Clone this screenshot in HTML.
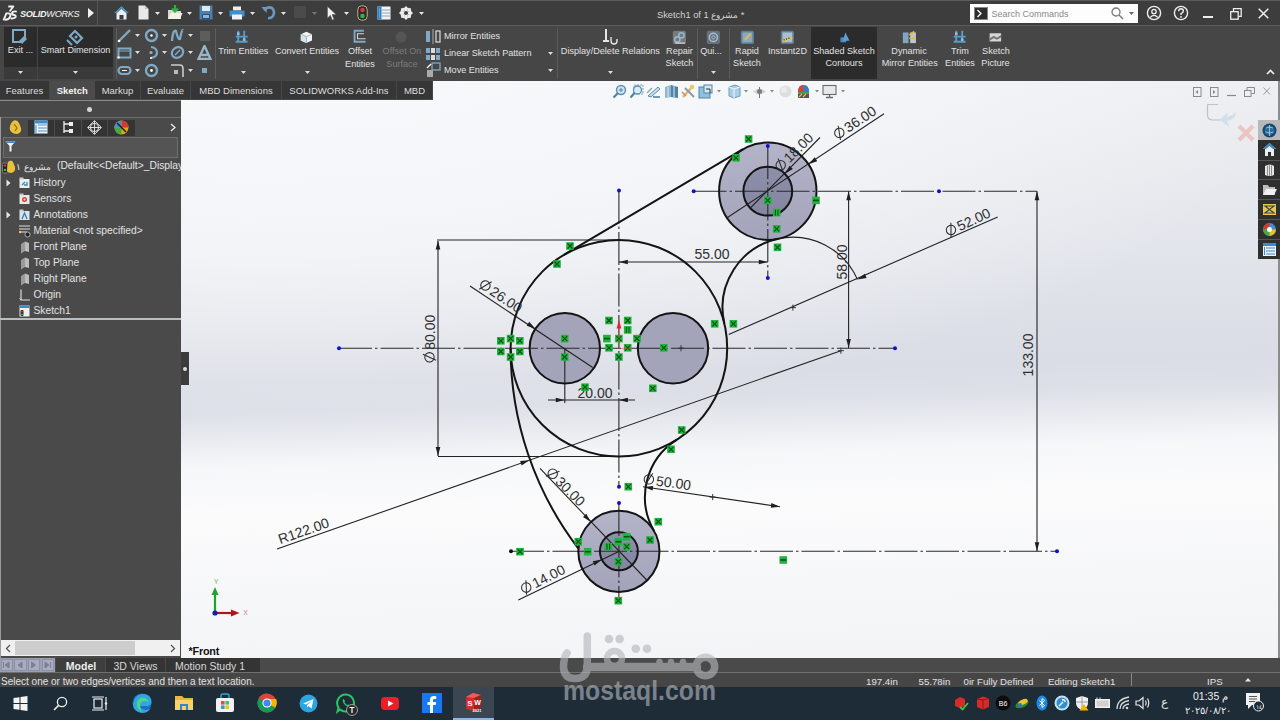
<!DOCTYPE html>
<html><head><meta charset="utf-8">
<style>
*{margin:0;padding:0;box-sizing:border-box}
html,body{width:1280px;height:720px;overflow:hidden;background:#464646;font-family:"Liberation Sans",sans-serif}
.a{position:absolute}
.t{position:absolute;white-space:nowrap;color:#e4e4e4;font-size:10px;line-height:12px}
#title{left:0;top:0;width:1280px;height:26px;background:#3d3d3d;border-bottom:1px solid #5c5c5c}
#ribbon{left:0;top:27px;width:1280px;height:53px;background:#464646}
#tabs{left:0;top:80px;width:1280px;height:20px;background:#484848}
#left{left:0;top:100px;width:181px;height:558px;background:#4a4a4a}
#view{left:181px;top:81px;width:1099px;height:577px;background:radial-gradient(ellipse 980px 340px at 120px 0px,rgba(248,249,251,0.97) 0%,rgba(248,249,251,0.72) 50%,rgba(248,249,251,0) 100%),linear-gradient(178.4deg,#eef0f3 15px,#e9ebef 95px,#e2e5eb 195px,#dcdfe6 270px,#dadde5 305px,#dde0e7 333px,#e9ebf0 360px,#f6f7f9 387px,#fbfbfc 435px,#f3f4f6 592px)}
#btabs{left:0;top:658px;width:1280px;height:14px;background:#474747}
#status{left:0;top:672px;width:1280px;height:14px;background:#444444;border-top:1px solid #6a6a6a}
#task{left:0;top:686px;width:1280px;height:34px;background:#1d2b37}
</style></head><body>
<div id="title" class="a">
<div class="a" style="left:0;top:0;width:1280px;height:1px;background:#5a5a5a"></div>
<div class="a" style="left:97px;top:1px;width:1px;height:24px;background:#555"></div>
<svg class="a" style="left:0;top:0" width="20" height="22" viewBox="0 0 20 22"><g fill="none" stroke="#f2f2f2" stroke-width="1.9" stroke-linejoin="round"><path d="M8.3,6.5 H13.3 L9.6,11.5"/><path d="M5.6,13.4 H8.6 Q11.3,13.6 10.2,16.4 Q9.2,19.6 5,19.8 M6.3,13.5 L3.5,20.3"/><path d="M16.8,11.6 Q12.6,10.8 12,13 Q11.8,14.6 14.2,15 Q16.2,15.6 15.6,17.2 Q14.8,18.8 10.6,18.4"/></g></svg>
<div class="t" style="left:20px;top:8px;font-size:9.2px;font-weight:bold;font-style:italic;color:#f2f2f2;letter-spacing:-0.35px">SOLID<span style="font-weight:normal">WORKS</span></div>
<svg class="a" style="left:87px;top:8px" width="8" height="10"><path d="M1,0 L7,5 L1,10Z" fill="#f0f0f0"/></svg>
<svg class="a" style="left:114px;top:6px" width="15" height="14" viewBox="0 0 15 14"><path d="M7.5,0.5 L14.5,7 L12.5,7 L12.5,13.5 L2.5,13.5 L2.5,7 L0.5,7Z" fill="#e8eef2"/><path d="M7.5,0.5 L14.5,7 L12,7 L7.5,3 L3,7 L0.5,7Z" fill="#3d87b8"/><rect x="5.5" y="9" width="4" height="4.5" fill="#3d3d3d"/></svg>
<svg class="a" style="left:138px;top:5px" width="11" height="15"><path d="M0.5,0.5 H7 L10.5,4 V14.5 H0.5Z" fill="#e9e9e9"/><path d="M7,0.5 V4 H10.5" fill="#bbb"/></svg>
<svg class="a" style="left:167px;top:4px" width="16" height="16" viewBox="0 0 16 16"><path d="M1,6 H6 L7,7 H14 V15 H1Z" fill="#d8d8c8"/><path d="M1,15 L4,9 H15.5 L13,15Z" fill="#f2f2e6"/><path d="M8,1 V7 M5,4.5 L8,7.5 L11,4.5" stroke="#2fae3f" stroke-width="2.2" fill="none"/></svg>
<svg class="a" style="left:199px;top:5px" width="14" height="15" viewBox="0 0 14 15"><rect x="0.5" y="0.5" width="13" height="14" fill="#4a7fae"/><rect x="3" y="1" width="8" height="5" fill="#dfe9f2"/><rect x="3" y="9" width="8" height="5.5" fill="#2b4f70"/><rect x="4" y="10" width="6" height="3" fill="#8fb6d8"/></svg>
<svg class="a" style="left:229px;top:6px" width="16" height="14" viewBox="0 0 16 14"><rect x="4" y="0.5" width="8" height="4" fill="#f0f0f0"/><rect x="0.5" y="4.5" width="15" height="6" fill="#3f8fcc"/><rect x="3" y="8.5" width="10" height="5" fill="#f2f2f2"/></svg>
<svg class="a" style="left:261px;top:5px" width="15" height="15" viewBox="0 0 15 15"><path d="M3,5 Q7,1 11,3 Q14.5,6 12,11 Q10,13.5 7,13" stroke="#6c9ac4" stroke-width="2.6" fill="none"/><path d="M0.5,2 L5.5,8 L6,2Z" fill="#6c9ac4"/></svg>
<svg class="a" style="left:294px;top:6px" width="13" height="13"><rect x="0" y="0" width="12" height="12" fill="#4b4b4b"/></svg>
<svg class="a" style="left:327px;top:6px" width="10" height="15" viewBox="0 0 10 15"><path d="M0.5,0.5 L0.5,12 L3.3,9.3 L5.3,14 L7,13.2 L5,8.6 L9,8.6Z" fill="#f2f2f2" stroke="#666" stroke-width="0.6"/></svg>
<svg class="a" style="left:357px;top:5px" width="11" height="16" viewBox="0 0 11 16"><rect x="0.8" y="0.8" width="9.4" height="14.4" rx="4" fill="#2b2b2b" stroke="#b8b48a" stroke-width="1"/><circle cx="5.5" cy="5" r="2.3" fill="#d9363a"/><circle cx="5.5" cy="11" r="2.3" fill="#38b04a"/></svg>
<svg class="a" style="left:377px;top:6px" width="14" height="14" viewBox="0 0 14 14"><rect x="0.5" y="0.5" width="13" height="13" fill="#f4f4f4"/><rect x="0.5" y="0.5" width="4" height="13" fill="#2f82c4"/><path d="M5,4 H13 M5,7 H13 M5,10 H13 M2.5,2 V12" stroke="#7a9cb8" stroke-width="0.9"/></svg>
<svg class="a" style="left:399px;top:6px" width="14" height="14" viewBox="0 0 14 14"><circle cx="7" cy="7" r="4.6" fill="none" stroke="#eee" stroke-width="2.4"/><path d="M7,0.5 V13.5 M0.5,7 H13.5 M2.4,2.4 L11.6,11.6 M11.6,2.4 L2.4,11.6" stroke="#eee" stroke-width="2"/><circle cx="7" cy="7" r="2" fill="#3d3d3d"/></svg>
<svg class="a" style="left:155px;top:12px" width="5" height="3"><path d="M0,0 H5 L2.5,3Z" fill="#e6e6e6"/></svg>
<svg class="a" style="left:187px;top:12px" width="5" height="3"><path d="M0,0 H5 L2.5,3Z" fill="#e6e6e6"/></svg>
<svg class="a" style="left:218px;top:12px" width="5" height="3"><path d="M0,0 H5 L2.5,3Z" fill="#e6e6e6"/></svg>
<svg class="a" style="left:250px;top:12px" width="5" height="3"><path d="M0,0 H5 L2.5,3Z" fill="#e6e6e6"/></svg>
<svg class="a" style="left:281px;top:12px" width="5" height="3"><path d="M0,0 H5 L2.5,3Z" fill="#e6e6e6"/></svg>
<svg class="a" style="left:344px;top:12px" width="5" height="3"><path d="M0,0 H5 L2.5,3Z" fill="#e6e6e6"/></svg>
<svg class="a" style="left:419px;top:12px" width="5" height="3"><path d="M0,0 H5 L2.5,3Z" fill="#e6e6e6"/></svg>
<svg class="a" style="left:312px;top:12px" width="5" height="3"><path d="M0,0 H5 L2.5,3Z" fill="#777"/></svg>
<div class="t" style="left:657px;top:8.5px;font-size:9.3px;color:#d2d2d2">Sketch1 of 1 <span style="font-size:9px">مشروع</span> *</div>
<div class="a" style="left:970px;top:4px;width:168px;height:19px;background:#fdfdfd"></div>
<svg class="a" style="left:974px;top:7px" width="14" height="13"><rect x="0.5" y="0.5" width="13" height="12" fill="#2e2e2e" stroke="#888" stroke-width="1"/><path d="M3.5,3 L7,6.5 L3.5,10" stroke="#fff" stroke-width="1.3" fill="none"/></svg>
<div class="t" style="left:991.5px;top:8px;font-size:9px;color:#8a8a8a">Search Commands</div>
<svg class="a" style="left:1111px;top:7px" width="13" height="13"><circle cx="5" cy="5" r="4" stroke="#777" stroke-width="1.3" fill="none"/><path d="M8,8 L12,12" stroke="#777" stroke-width="1.5"/></svg>
<svg class="a" style="left:1129px;top:12px" width="5" height="3"><path d="M0,0 H5 L2.5,3Z" fill="#666"/></svg>
<svg class="a" style="left:1146px;top:5px" width="16" height="16"><circle cx="8" cy="8" r="6.6" stroke="#eee" stroke-width="1.4" fill="none"/><circle cx="8" cy="6.5" r="2.2" stroke="#eee" stroke-width="1.3" fill="none"/><path d="M4.3,12.4 Q8,8.5 11.7,12.4" stroke="#eee" stroke-width="1.3" fill="none"/></svg>
<svg class="a" style="left:1173px;top:5px" width="16" height="16"><circle cx="8" cy="8" r="6.6" stroke="#eee" stroke-width="1.4" fill="none"/><path d="M5.7,6.2 Q5.7,3.8 8,3.8 Q10.4,3.8 10.4,6 Q10.4,7.4 8,8.6 V10" stroke="#eee" stroke-width="1.4" fill="none"/><circle cx="8" cy="12" r="0.9" fill="#eee"/></svg>
<div class="a" style="left:1203px;top:16px;width:10px;height:1.5px;background:#eee"></div>
<svg class="a" style="left:1230px;top:8px" width="12" height="12"><rect x="0.7" y="3.7" width="7.5" height="7.5" stroke="#eee" stroke-width="1.3" fill="none"/><path d="M3.5,3.5 V0.7 H11.2 V8.4 H8.5" stroke="#eee" stroke-width="1.3" fill="none"/></svg>
<svg class="a" style="left:1258px;top:8px" width="11" height="11"><path d="M0.7,0.7 L10.3,10.3 M10.3,0.7 L0.7,10.3" stroke="#eee" stroke-width="1.5"/></svg>
</div>
<div id="ribbon" class="a"></div>
<div class="a" style="left:4px;top:27px;width:33px;height:40px;background:#2b2b2b"></div>
<div class="a" style="left:4px;top:67px;width:33px;height:12px;background:#3a3a3a"></div>
<div class="a" style="left:38px;top:27px;width:75px;height:40px;background:#2b2b2b"></div>
<div class="a" style="left:38px;top:67px;width:75px;height:12px;background:#3a3a3a"></div>
<div class="a" style="left:811px;top:27px;width:66px;height:52px;background:#2b2b2b"></div>
<div class="a" style="left:116px;top:28px;width:1px;height:51px;background:#5c5c5c"></div>
<div class="a" style="left:215px;top:28px;width:1px;height:51px;background:#5c5c5c"></div>
<div class="a" style="left:557px;top:28px;width:1px;height:51px;background:#5c5c5c"></div>
<div class="a" style="left:697px;top:28px;width:1px;height:51px;background:#5c5c5c"></div>
<div class="a" style="left:729px;top:28px;width:1px;height:51px;background:#5c5c5c"></div>
<svg class="a" style="left:11.0px;top:28.0px" width="18.0" height="18.0" viewBox="0 0 18 18"><path d="M2,2 H14 V10 L10,14 H2Z" fill="none" stroke="#7fa9c4" stroke-width="2"/><path d="M8,13 L13,8 L16,11 L11,16Z" fill="#7fa9c4"/></svg>
<div class="t" style="left:-39.5px;width:120px;text-align:center;top:43.7px;font-size:9.1px;color:#e2e2e2">Exit ...</div>
<svg class="a" style="left:17.5px;top:70.5px" width="5" height="3"><path d="M0,0 H5 L2.5,3Z" fill="#dcdcdc"/></svg>
<svg class="a" style="left:66.0px;top:28.0px" width="18.0" height="18.0" viewBox="0 0 18 18"><path d="M4,8 L9,3 L16,10 L11,15Z" fill="none" stroke="#7fa9c4" stroke-width="2.2"/><path d="M1,12 L6,17" stroke="#7fa9c4" stroke-width="2"/><circle cx="10" cy="9" r="1.5" fill="#7fa9c4"/></svg>
<div class="t" style="left:15.5px;width:120px;text-align:center;top:43.7px;font-size:9.1px;color:#e2e2e2">Smart Dimension</div>
<svg class="a" style="left:72.5px;top:70.5px" width="5" height="3"><path d="M0,0 H5 L2.5,3Z" fill="#dcdcdc"/></svg>
<svg class="a" style="left:116.5px;top:28.1px" width="15.0" height="15.0" viewBox="0 0 15 15"><path d="M2,13 L13,2" stroke="#7fa9c4" stroke-width="2.4"/><circle cx="2" cy="13" r="1.3" fill="#fff"/></svg>
<svg class="a" style="left:144.0px;top:28.1px" width="15.0" height="15.0" viewBox="0 0 15 15"><circle cx="7.5" cy="7.5" r="5.5" fill="none" stroke="#7fa9c4" stroke-width="2.4"/><circle cx="7.5" cy="7.5" r="1.2" fill="#fff"/></svg>
<svg class="a" style="left:170.2px;top:28.1px" width="15.0" height="15.0" viewBox="0 0 15 15"><path d="M2,13 Q3,1 6,3 Q8,12 10,11 Q12,1 13,2" fill="none" stroke="#7fa9c4" stroke-width="2.2"/></svg>
<svg class="a" style="left:197.2px;top:28.1px" width="15.0" height="15.0" viewBox="0 0 15 15"><rect x="3" y="3" width="10" height="10" fill="#5d5d5d"/></svg>
<svg class="a" style="left:116.5px;top:45.3px" width="15.0" height="15.0" viewBox="0 0 15 15"><rect x="1.5" y="3.5" width="12" height="9" fill="none" stroke="#7fa9c4" stroke-width="2"/><path d="M1.5,6 H13" stroke="#7fa9c4" stroke-width="1"/><circle cx="1.5" cy="12.5" r="1.2" fill="#fff"/></svg>
<svg class="a" style="left:144.0px;top:45.3px" width="15.0" height="15.0" viewBox="0 0 15 15"><path d="M7,2 Q13,3 13,7.5 Q13,12 7,13" fill="none" stroke="#7fa9c4" stroke-width="2.2"/><circle cx="7" cy="7.5" r="1.6" fill="#aaa"/><circle cx="7" cy="13" r="1" fill="#fff"/></svg>
<svg class="a" style="left:170.2px;top:45.3px" width="15.0" height="15.0" viewBox="0 0 15 15"><ellipse cx="7.5" cy="7.5" rx="6" ry="5" transform="rotate(-35 7.5 7.5)" fill="none" stroke="#7fa9c4" stroke-width="2.2"/><path d="M5,10 L10,5" stroke="#7fa9c4" stroke-width="1.6"/></svg>
<svg class="a" style="left:197.2px;top:45.3px" width="15.0" height="15.0" viewBox="0 0 15 15"><path d="M7.5,1 L13.5,14 H1.5Z M4.5,10 H10.5" fill="none" stroke="#9ab8cc" stroke-width="2.3"/></svg>
<svg class="a" style="left:116.5px;top:62.8px" width="15.0" height="15.0" viewBox="0 0 15 15"><rect x="1.5" y="4" width="12" height="7" rx="3.5" fill="none" stroke="#7fa9c4" stroke-width="2.2"/><path d="M5,7.5 H10" stroke="#fff" stroke-width="1"/></svg>
<svg class="a" style="left:144.0px;top:62.8px" width="15.0" height="15.0" viewBox="0 0 15 15"><circle cx="7.5" cy="7.5" r="5.5" fill="none" stroke="#7fa9c4" stroke-width="2.4"/><circle cx="7.5" cy="7.5" r="1.4" fill="#fff"/></svg>
<svg class="a" style="left:170.2px;top:62.8px" width="15.0" height="15.0" viewBox="0 0 15 15"><path d="M1,2 H10 Q13,2 13,6 V14" fill="none" stroke="#ccc" stroke-width="1.6"/><rect x="4" y="7" width="4" height="4" fill="#bbb"/></svg>
<svg class="a" style="left:197.2px;top:62.8px" width="15.0" height="15.0" viewBox="0 0 15 15"><rect x="5" y="5" width="5" height="5" fill="#7fa9c4"/></svg>
<svg class="a" style="left:135.0px;top:34.1px" width="5" height="3"><path d="M0,0 H5 L2.5,3Z" fill="#dcdcdc"/></svg>
<svg class="a" style="left:161.5px;top:34.1px" width="5" height="3"><path d="M0,0 H5 L2.5,3Z" fill="#dcdcdc"/></svg>
<svg class="a" style="left:188.1px;top:34.1px" width="5" height="3"><path d="M0,0 H5 L2.5,3Z" fill="#dcdcdc"/></svg>
<svg class="a" style="left:135.0px;top:51.3px" width="5" height="3"><path d="M0,0 H5 L2.5,3Z" fill="#dcdcdc"/></svg>
<svg class="a" style="left:161.5px;top:51.3px" width="5" height="3"><path d="M0,0 H5 L2.5,3Z" fill="#dcdcdc"/></svg>
<svg class="a" style="left:188.1px;top:51.3px" width="5" height="3"><path d="M0,0 H5 L2.5,3Z" fill="#dcdcdc"/></svg>
<svg class="a" style="left:135.0px;top:68.8px" width="5" height="3"><path d="M0,0 H5 L2.5,3Z" fill="#dcdcdc"/></svg>
<svg class="a" style="left:188.1px;top:68.8px" width="5" height="3"><path d="M0,0 H5 L2.5,3Z" fill="#dcdcdc"/></svg>
<svg class="a" style="left:234.35px;top:29.35px" width="15.299999999999999" height="15.299999999999999" viewBox="0 0 18 18"><path d="M5,2 V16 M12,2 V16 M2,9 H16 M2,15 H16" stroke="#5a9cc8" stroke-width="2.2"/><rect x="3.5" y="4" width="3" height="3" fill="#8cc4e6"/><rect x="10.5" y="11" width="3" height="3" fill="#8cc4e6"/></svg>
<div class="t" style="left:183.3px;width:120px;text-align:center;top:44.6px;font-size:9.1px;color:#e2e2e2"><u style="text-decoration:none;border-bottom:0">T</u>rim Entities</div>
<svg class="a" style="left:240.5px;top:70.5px" width="5" height="3"><path d="M0,0 H5 L2.5,3Z" fill="#dcdcdc"/></svg>
<svg class="a" style="left:299.6px;top:30.6px" width="12.8" height="12.8" viewBox="0 0 16 16"><path d="M8,1 L15,4 V12 L8,15 L1,12 V4Z" fill="#f4f4f4"/><path d="M1,4 L8,7 V15 L1,12Z" fill="#d8e4ea"/><path d="M8,7 V15 M1,4 L8,7 L15,4" stroke="#7ab0c8" stroke-width="1" fill="none"/></svg>
<div class="t" style="left:247px;width:120px;text-align:center;top:44.6px;font-size:9.1px;color:#e2e2e2">Convert Entities</div>
<svg class="a" style="left:304.5px;top:70.5px" width="5" height="3"><path d="M0,0 H5 L2.5,3Z" fill="#dcdcdc"/></svg>
<svg class="a" style="left:352.35px;top:29.35px" width="15.299999999999999" height="15.299999999999999" viewBox="0 0 18 18"><path d="M14,2 H3 V15 H16" fill="none" stroke="#7fa9c4" stroke-width="2.2"/><path d="M14,5.5 H6.5 V11.5 H16" fill="none" stroke="#d0d8de" stroke-width="1.2"/></svg>
<div class="t" style="left:300px;width:120px;text-align:center;top:44.6px;font-size:9.1px;color:#e2e2e2">Offset</div>
<div class="t" style="left:300px;width:120px;text-align:center;top:57.7px;font-size:9.1px;color:#e2e2e2">Entities</div>
<svg class="a" style="left:393.0px;top:29.0px" width="16.0" height="16.0" viewBox="0 0 16 16"><circle cx="8" cy="8" r="5.5" fill="#555"/></svg>
<div class="t" style="left:342px;width:120px;text-align:center;top:44.6px;font-size:9.1px;color:#7c7c7c">Offset On</div>
<div class="t" style="left:342px;width:120px;text-align:center;top:57.7px;font-size:9.1px;color:#7c7c7c">Surface</div>
<svg class="a" style="left:425.0px;top:28.0px" width="16.0" height="16.0" viewBox="0 0 16 16"><rect x="1" y="3" width="4" height="11" fill="#7fa9c4"/><rect x="11" y="3" width="4" height="11" fill="none" stroke="#ddd" stroke-width="1.2"/><path d="M8,1 V16" stroke="#aaa" stroke-width="1"/></svg>
<div class="t" style="left:444px;top:29.7px;font-size:9.1px;color:#e2e2e2">Mirror Entities</div>
<svg class="a" style="left:425.0px;top:45.6px" width="16.0" height="16.0" viewBox="0 0 16 16"><rect x="1" y="2" width="4" height="5" fill="#7fa9c4"/><rect x="6" y="2" width="4" height="5" fill="#ddd"/><rect x="11" y="2" width="4" height="5" fill="#7fa9c4"/><rect x="1" y="9" width="4" height="5" fill="#7fa9c4"/><rect x="6" y="9" width="4" height="5" fill="#ddd"/><rect x="11" y="9" width="4" height="5" fill="#7fa9c4"/></svg>
<div class="t" style="left:444px;top:47.300000000000004px;font-size:9.1px;color:#e2e2e2">Linear Sketch Pattern</div>
<svg class="a" style="left:548.0px;top:52.1px" width="5" height="3"><path d="M0,0 H5 L2.5,3Z" fill="#dcdcdc"/></svg>
<svg class="a" style="left:425.0px;top:62.2px" width="16.0" height="16.0" viewBox="0 0 16 16"><rect x="7" y="1" width="8" height="7" fill="none" stroke="#7fa9c4" stroke-width="1.3"/><rect x="2" y="8" width="6" height="7" fill="#aaa"/><path d="M2,6 L6,2" stroke="#fff" stroke-width="1.2"/></svg>
<div class="t" style="left:444px;top:63.900000000000006px;font-size:9.1px;color:#e2e2e2">Move Entities</div>
<svg class="a" style="left:548.0px;top:68.7px" width="5" height="3"><path d="M0,0 H5 L2.5,3Z" fill="#dcdcdc"/></svg>
<svg class="a" style="left:601.0px;top:28.0px" width="18.0" height="18.0" viewBox="0 0 18 18"><path d="M5,1 V13 M2,13 H8" stroke="#e6e6e6" stroke-width="2"/><path d="M10,9 V13 Q10,16 13,16 Q16,16 16,13 V11" fill="none" stroke="#e6e6e6" stroke-width="1.4"/></svg>
<div class="t" style="left:550.4px;width:120px;text-align:center;top:44.5px;font-size:9.1px;color:#e2e2e2">Display/Delete Relations</div>
<svg class="a" style="left:607.5px;top:70.5px" width="5" height="3"><path d="M0,0 H5 L2.5,3Z" fill="#dcdcdc"/></svg>
<svg class="a" style="left:671.62px;top:29.62px" width="14.76" height="14.76" viewBox="0 0 18 18"><rect x="1" y="1" width="16" height="16" rx="2" fill="#7a7a7a"/><circle cx="11.5" cy="6.5" r="3.2" fill="none" stroke="#8fb8d2" stroke-width="1.8"/><circle cx="6.5" cy="11.5" r="3.2" fill="none" stroke="#8fb8d2" stroke-width="1.8"/><path d="M4,16 H16" stroke="#ddd" stroke-width="1.4"/></svg>
<div class="t" style="left:619.5px;width:120px;text-align:center;top:44.5px;font-size:9.1px;color:#e2e2e2">Repair</div>
<div class="t" style="left:619.5px;width:120px;text-align:center;top:57.300000000000004px;font-size:9.1px;color:#e2e2e2">Sketch</div>
<svg class="a" style="left:705.62px;top:29.62px" width="14.76" height="14.76" viewBox="0 0 18 18"><rect x="1" y="1" width="16" height="16" rx="2" fill="#62737f"/><circle cx="9" cy="9" r="5" fill="none" stroke="#aebfcb" stroke-width="1.8"/><circle cx="9" cy="9" r="2" fill="none" stroke="#aebfcb" stroke-width="1.2"/></svg>
<div class="t" style="left:651px;width:120px;text-align:center;top:44.5px;font-size:9.1px;color:#e2e2e2">Qui...</div>
<svg class="a" style="left:710.5px;top:70.5px" width="5" height="3"><path d="M0,0 H5 L2.5,3Z" fill="#dcdcdc"/></svg>
<svg class="a" style="left:739.62px;top:29.62px" width="14.76" height="14.76" viewBox="0 0 18 18"><rect x="1" y="1" width="16" height="16" rx="2" fill="#5f7f98"/><rect x="3" y="3" width="12" height="12" fill="#8aa9bf"/><path d="M6,12 L13,5" stroke="#e9b64a" stroke-width="2.6"/></svg>
<div class="t" style="left:687px;width:120px;text-align:center;top:44.5px;font-size:9.1px;color:#e2e2e2">Rapid</div>
<div class="t" style="left:687px;width:120px;text-align:center;top:57.300000000000004px;font-size:9.1px;color:#e2e2e2">Sketch</div>
<svg class="a" style="left:779.62px;top:29.62px" width="14.76" height="14.76" viewBox="0 0 18 18"><rect x="1" y="1" width="16" height="16" rx="2" fill="#5f7f98"/><rect x="3" y="3" width="12" height="12" fill="#a9c0d0"/><path d="M3,14 L15,9" stroke="#e9c34a" stroke-width="2.4"/><path d="M5,13 V11 M8,12 V10 M11,11 V9" stroke="#222" stroke-width="1"/></svg>
<div class="t" style="left:727.5px;width:120px;text-align:center;top:44.5px;font-size:9.1px;color:#e2e2e2">Instant2D</div>
<svg class="a" style="left:837.62px;top:29.62px" width="14.76" height="14.76" viewBox="0 0 18 18"><rect x="3" y="9" width="7" height="6" fill="#4a8cc0"/><path d="M9,3 L14,13 H6Z" fill="#5aa0d4"/></svg>
<div class="t" style="left:784px;width:120px;text-align:center;top:44.5px;font-size:9.1px;color:#e2e2e2">Shaded Sketch</div>
<div class="t" style="left:784px;width:120px;text-align:center;top:57.300000000000004px;font-size:9.1px;color:#e2e2e2">Contours</div>
<svg class="a" style="left:901.62px;top:29.62px" width="14.76" height="14.76" viewBox="0 0 18 18"><rect x="1" y="3" width="7" height="13" fill="#7fa6c2"/><rect x="10" y="3" width="7" height="13" fill="#b9c9d3"/><path d="M9,6 L15,2 M9,10 L16,10" stroke="#e9b64a" stroke-width="2.3"/></svg>
<div class="t" style="left:849px;width:120px;text-align:center;top:44.5px;font-size:9.1px;color:#e2e2e2">Dynamic</div>
<div class="t" style="left:849.7px;width:120px;text-align:center;top:57.300000000000004px;font-size:9.1px;color:#e2e2e2">Mirror Entities</div>
<svg class="a" style="left:952.35px;top:29.35px" width="15.299999999999999" height="15.299999999999999" viewBox="0 0 18 18"><path d="M5,2 V16 M12,2 V16 M2,9 H16 M2,15 H16" stroke="#5a9cc8" stroke-width="2.2"/><rect x="3.5" y="4" width="3" height="3" fill="#8cc4e6"/><rect x="10.5" y="11" width="3" height="3" fill="#8cc4e6"/></svg>
<div class="t" style="left:900px;width:120px;text-align:center;top:44.5px;font-size:9.1px;color:#e2e2e2">Trim</div>
<div class="t" style="left:900px;width:120px;text-align:center;top:57.300000000000004px;font-size:9.1px;color:#e2e2e2">Entities</div>
<svg class="a" style="left:987.62px;top:29.62px" width="14.76" height="14.76" viewBox="0 0 18 18"><rect x="2" y="4" width="14" height="10" fill="#d6d6d6"/><path d="M2,10 L7,7 L11,9 L16,6 V9 L11,12 L7,10 L2,13Z" fill="#777"/></svg>
<div class="t" style="left:936px;width:120px;text-align:center;top:44.5px;font-size:9.1px;color:#e2e2e2">Sketch</div>
<div class="t" style="left:935.5px;width:120px;text-align:center;top:57.300000000000004px;font-size:9.1px;color:#e2e2e2">Picture</div>
<svg class="a" style="left:1266px;top:69px" width="9" height="6"><path d="M1,5 L4.5,1.5 L8,5" stroke="#eee" stroke-width="1.6" fill="none"/></svg>
<div id="view" class="a" style="overflow:hidden"><div class="a" style="left:-181px;top:-81px;width:1280px;height:720px">
<svg class="a" style="left:0;top:0" width="1280" height="720" viewBox="0 0 1280 720">
<defs><linearGradient id="g1" x1="0" y1="0" x2="0" y2="1"><stop offset="0" stop-color="#b3b4c8"/><stop offset="1" stop-color="#a3a4bb"/></linearGradient>
<linearGradient id="g2" x1="0" y1="0" x2="0" y2="1"><stop offset="0" stop-color="#8e8fa9"/><stop offset="1" stop-color="#8485a1"/></linearGradient></defs>
<circle cx="767.8" cy="191.2" r="48.7" fill="url(#g1)"/>
<circle cx="618.9" cy="551.3" r="40.6" fill="url(#g1)"/>
<circle cx="767.8" cy="191.2" r="24.4" fill="url(#g2)"/>
<circle cx="618.9" cy="551.3" r="19.0" fill="url(#g2)"/>
<circle cx="564.8" cy="348.2" r="35.2" fill="#a3a4ba"/>
<circle cx="673.0" cy="348.2" r="35.2" fill="#a3a4ba"/>
<line x1="339.0" y1="348.2" x2="895.0" y2="348.2" stroke="#2a2a2a" stroke-width="1.1" stroke-dasharray="33,3,2.5,3" fill="none"/>
<line x1="618.9" y1="190.5" x2="618.9" y2="487.0" stroke="#2a2a2a" stroke-width="1.1" stroke-dasharray="33,3,2.5,3" fill="none"/>
<line x1="693.5" y1="191.2" x2="1037.0" y2="191.2" stroke="#2a2a2a" stroke-width="1.1" stroke-dasharray="33,3,2.5,3" fill="none"/>
<line x1="767.8" y1="146.0" x2="767.8" y2="278.0" stroke="#2a2a2a" stroke-width="1.1" stroke-dasharray="33,3,2.5,3" fill="none"/>
<line x1="511.0" y1="551.3" x2="1057.0" y2="551.3" stroke="#2a2a2a" stroke-width="1.1" stroke-dasharray="33,3,2.5,3" fill="none"/>
<line x1="618.9" y1="503.0" x2="618.9" y2="602.0" stroke="#2a2a2a" stroke-width="1.1" stroke-dasharray="33,3,2.5,3" fill="none"/>
<line x1="437.0" y1="240.0" x2="620.0" y2="240.0" stroke="#222" stroke-width="1.1" fill="none"/>
<line x1="438.0" y1="456.5" x2="619.0" y2="456.5" stroke="#222" stroke-width="1.1" fill="none"/>
<line x1="438.0" y1="241.0" x2="438.0" y2="456.0" stroke="#222" stroke-width="1.1" fill="none"/>
<line x1="618.9" y1="262.0" x2="767.8" y2="262.0" stroke="#222" stroke-width="1.1" fill="none"/>
<line x1="548.0" y1="400.0" x2="635.0" y2="400.0" stroke="#222" stroke-width="1.1" fill="none"/>
<line x1="564.8" y1="348.0" x2="564.8" y2="403.0" stroke="#222" stroke-width="1.1" fill="none"/>
<line x1="848.6" y1="191.2" x2="848.6" y2="348.0" stroke="#222" stroke-width="1.1" fill="none"/>
<line x1="1037.0" y1="191.2" x2="1037.0" y2="551.3" stroke="#222" stroke-width="1.1" fill="none"/>
<line x1="470.0" y1="286.0" x2="592.7" y2="367.5" stroke="#222" stroke-width="1.1" fill="none"/>
<line x1="727.5" y1="217.5" x2="884.0" y2="113.7" stroke="#222" stroke-width="1.1" fill="none"/>
<line x1="750.0" y1="208.3" x2="820.0" y2="137.5" stroke="#222" stroke-width="1.1" fill="none"/>
<line x1="728.7" y1="334.6" x2="997.7" y2="217.0" stroke="#222" stroke-width="1.1" fill="none"/>
<path d="M778.1,238.8 A70.4,70.4 0 0,1 857.4,279.4" stroke="#222" stroke-width="1.1" fill="none"/>
<line x1="540.0" y1="468.3" x2="646.7" y2="580.0" stroke="#222" stroke-width="1.1" fill="none"/>
<line x1="518.3" y1="600.0" x2="618.3" y2="551.7" stroke="#222" stroke-width="1.1" fill="none"/>
<line x1="643.0" y1="486.7" x2="780.0" y2="506.7" stroke="#222" stroke-width="1.1" fill="none"/>
<line x1="277.0" y1="549.0" x2="840.9" y2="350.7" stroke="#222" stroke-width="1.1" fill="none"/>
<path d="M438.0,240.5 L440.3,249.5 L435.7,249.5Z" fill="#1e1e1e"/>
<path d="M438.0,456.0 L435.7,447.0 L440.3,447.0Z" fill="#1e1e1e"/>
<path d="M618.9,262.0 L627.9,259.7 L627.9,264.3Z" fill="#1e1e1e"/>
<path d="M767.8,262.0 L758.8,264.3 L758.8,259.7Z" fill="#1e1e1e"/>
<path d="M564.8,400.0 L555.8,402.3 L555.8,397.7Z" fill="#1e1e1e"/>
<path d="M618.9,400.0 L627.9,397.7 L627.9,402.3Z" fill="#1e1e1e"/>
<path d="M848.6,191.2 L850.9,200.2 L846.3,200.2Z" fill="#1e1e1e"/>
<path d="M848.6,348.0 L846.3,339.0 L850.9,339.0Z" fill="#1e1e1e"/>
<path d="M1037.0,191.2 L1039.3,200.2 L1034.7,200.2Z" fill="#1e1e1e"/>
<path d="M1037.0,551.3 L1034.7,542.3 L1039.3,542.3Z" fill="#1e1e1e"/>
<path d="M535.4,328.7 L526.7,325.7 L529.2,321.8Z" fill="#1e1e1e"/>
<path d="M808.4,164.2 L814.7,157.3 L817.2,161.2Z" fill="#1e1e1e"/>
<path d="M784.9,173.8 L789.6,165.8 L792.9,169.1Z" fill="#1e1e1e"/>
<path d="M857.4,279.4 L864.8,273.7 L866.6,277.9Z" fill="#1e1e1e"/>
<path d="M590.8,521.9 L583.0,517.0 L586.3,513.8Z" fill="#1e1e1e"/>
<path d="M601.8,559.5 L594.7,565.5 L592.7,561.3Z" fill="#1e1e1e"/>
<path d="M780.0,506.7 L770.8,507.7 L771.4,503.1Z" fill="#1e1e1e"/>
<path d="M644.0,486.9 L653.2,485.9 L652.6,490.5Z" fill="#1e1e1e"/>
<path d="M529.3,460.3 L521.6,465.4 L520.1,461.1Z" fill="#1e1e1e"/>
<path d="M789.9,307.6H795.9M792.9,304.6V310.6" stroke="#333" stroke-width="1"/>
<path d="M837.9,350.7H843.9M840.9,347.7V353.7" stroke="#333" stroke-width="1"/>
<path d="M709.7,497.1H715.7M712.7,494.1V500.1" stroke="#333" stroke-width="1"/>
<path d="M678.0,348.2H684.0M681.0,345.2V351.2" stroke="#333" stroke-width="1"/>
<circle cx="618.9" cy="348.2" r="108.3" stroke="#141414" stroke-width="2" fill="none"/>
<circle cx="767.8" cy="191.2" r="48.7" stroke="#141414" stroke-width="2" fill="none"/>
<circle cx="767.8" cy="191.2" r="24.4" stroke="#141414" stroke-width="2" fill="none"/>
<circle cx="618.9" cy="551.3" r="40.6" stroke="#141414" stroke-width="2" fill="none"/>
<circle cx="618.9" cy="551.3" r="19.0" stroke="#141414" stroke-width="2" fill="none"/>
<circle cx="564.8" cy="348.2" r="35.2" stroke="#141414" stroke-width="2" fill="none"/>
<circle cx="673.0" cy="348.2" r="35.2" stroke="#141414" stroke-width="2" fill="none"/>
<line x1="563.9" y1="254.9" x2="743.0" y2="149.2" stroke="#141414" stroke-width="2" fill="none"/>
<path d="M778.1,238.8 A70.4,70.4 0 0,0 724.4,323.6" stroke="#141414" stroke-width="2" fill="none"/>
<path d="M676.6,439.8 A67.7,67.7 0 0,0 654.1,531.0" stroke="#141414" stroke-width="2" fill="none"/>
<path d="M510.6,348.2 A330.3,330.3 0 0,0 578.4,548.6" stroke="#141414" stroke-width="2" fill="none"/>
<circle cx="339.0" cy="348.2" r="2" fill="#1010d0"/>
<circle cx="895.0" cy="348.2" r="2" fill="#1010d0"/>
<circle cx="619.0" cy="190.5" r="2" fill="#1010d0"/>
<circle cx="619.0" cy="486.7" r="2" fill="#1010d0"/>
<circle cx="619.0" cy="503.0" r="2" fill="#1010d0"/>
<circle cx="693.7" cy="191.2" r="2" fill="#1010d0"/>
<circle cx="939.0" cy="191.2" r="2" fill="#1010d0"/>
<circle cx="767.8" cy="146.0" r="2" fill="#1010d0"/>
<circle cx="767.8" cy="278.0" r="2" fill="#1010d0"/>
<circle cx="1057.0" cy="551.3" r="2" fill="#1010d0"/>
<circle cx="511" cy="551.3" r="2" fill="#111"/>
<g transform="translate(429.5,338.5) rotate(-90)"><circle cx="-18.8" cy="0" r="4.7" fill="none" stroke="#2e2e2e" stroke-width="1.05"/><line x1="-21.8" y1="6.6" x2="-15.8" y2="-6.6" stroke="#2e2e2e" stroke-width="1.05"/><text x="-11.3" y="5.0" font-size="14" fill="#2e2e2e">80.00</text></g>
<g transform="translate(501.0,296.0) rotate(34)"><circle cx="-18.8" cy="0" r="4.7" fill="none" stroke="#2e2e2e" stroke-width="1.05"/><line x1="-21.8" y1="6.6" x2="-15.8" y2="-6.6" stroke="#2e2e2e" stroke-width="1.05"/><text x="-11.3" y="5.0" font-size="14" fill="#2e2e2e">26.00</text></g>
<text transform="translate(712.0,254.0) rotate(0)" x="0" y="5.0" text-anchor="middle" font-size="14" fill="#2e2e2e">55.00</text>
<text transform="translate(595.0,392.5) rotate(0)" x="0" y="5.0" text-anchor="middle" font-size="14" fill="#2e2e2e">20.00</text>
<text transform="translate(841.5,262.0) rotate(-90)" x="0" y="5.0" text-anchor="middle" font-size="14" fill="#2e2e2e">58.00</text>
<text transform="translate(1028.0,355.0) rotate(-90)" x="0" y="5.0" text-anchor="middle" font-size="14" fill="#2e2e2e">133.00</text>
<g transform="translate(794.0,152.0) rotate(-45)"><circle cx="-18.8" cy="0" r="4.7" fill="none" stroke="#2e2e2e" stroke-width="1.05"/><line x1="-21.8" y1="6.6" x2="-15.8" y2="-6.6" stroke="#2e2e2e" stroke-width="1.05"/><text x="-11.3" y="5.0" font-size="14" fill="#2e2e2e">18.00</text></g>
<g transform="translate(855.0,122.5) rotate(-33.5)"><circle cx="-18.8" cy="0" r="4.7" fill="none" stroke="#2e2e2e" stroke-width="1.05"/><line x1="-21.8" y1="6.6" x2="-15.8" y2="-6.6" stroke="#2e2e2e" stroke-width="1.05"/><text x="-11.3" y="5.0" font-size="14" fill="#2e2e2e">36.00</text></g>
<g transform="translate(968.0,222.0) rotate(-25)"><circle cx="-18.8" cy="0" r="4.7" fill="none" stroke="#2e2e2e" stroke-width="1.05"/><line x1="-21.8" y1="6.6" x2="-15.8" y2="-6.6" stroke="#2e2e2e" stroke-width="1.05"/><text x="-11.3" y="5.0" font-size="14" fill="#2e2e2e">52.00</text></g>
<g transform="translate(566.0,487.0) rotate(45)"><circle cx="-18.8" cy="0" r="4.7" fill="none" stroke="#2e2e2e" stroke-width="1.05"/><line x1="-21.8" y1="6.6" x2="-15.8" y2="-6.6" stroke="#2e2e2e" stroke-width="1.05"/><text x="-11.3" y="5.0" font-size="14" fill="#2e2e2e">30.00</text></g>
<g transform="translate(667.5,482.0) rotate(8)"><circle cx="-18.8" cy="0" r="4.7" fill="none" stroke="#2e2e2e" stroke-width="1.05"/><line x1="-21.8" y1="6.6" x2="-15.8" y2="-6.6" stroke="#2e2e2e" stroke-width="1.05"/><text x="-11.3" y="5.0" font-size="14" fill="#2e2e2e">50.00</text></g>
<g transform="translate(543.0,579.0) rotate(-27)"><circle cx="-18.8" cy="0" r="4.7" fill="none" stroke="#2e2e2e" stroke-width="1.05"/><line x1="-21.8" y1="6.6" x2="-15.8" y2="-6.6" stroke="#2e2e2e" stroke-width="1.05"/><text x="-11.3" y="5.0" font-size="14" fill="#2e2e2e">14.00</text></g>
<text transform="translate(303.5,530.8) rotate(-19.3)" x="0" y="5.0" text-anchor="middle" font-size="14" fill="#2e2e2e">R122.00</text>
<rect x="744.8" y="135.2" width="7.6" height="7.6" fill="#1fb53c"/>
<path d="M746.1,136.5L751.1,141.5M751.1,136.5L746.1,141.5" stroke="#0a4f19" stroke-width="1.2"/>
<rect x="732.2" y="154.0" width="7.6" height="7.6" fill="#1fb53c"/>
<path d="M733.5,155.3L738.5,160.3M738.5,155.3L733.5,160.3" stroke="#0a4f19" stroke-width="1.2"/>
<rect x="763.9" y="196.6" width="7.6" height="7.6" fill="#1fb53c"/>
<path d="M765.2,197.9L770.2,202.9M770.2,197.9L765.2,202.9" stroke="#0a4f19" stroke-width="1.2"/>
<rect x="812.2" y="196.6" width="7.6" height="7.6" fill="#1fb53c"/>
<path d="M813.0,200.4H819.0" stroke="#08501a" stroke-width="1.6"/>
<rect x="772.9" y="208.8" width="7.6" height="7.6" fill="#1fb53c"/>
<path d="M775.4,209.6V215.6M778.0,209.6V215.6" stroke="#08501a" stroke-width="1"/>
<rect x="772.9" y="225.1" width="7.6" height="7.6" fill="#1fb53c"/>
<path d="M774.2,226.4L779.2,231.4M779.2,226.4L774.2,231.4" stroke="#0a4f19" stroke-width="1.2"/>
<rect x="773.7" y="243.5" width="7.6" height="7.6" fill="#1fb53c"/>
<path d="M775.0,244.8L780.0,249.8M780.0,244.8L775.0,249.8" stroke="#0a4f19" stroke-width="1.2"/>
<rect x="710.9" y="320.0" width="7.6" height="7.6" fill="#1fb53c"/>
<path d="M712.2,321.3L717.2,326.3M717.2,321.3L712.2,326.3" stroke="#0a4f19" stroke-width="1.2"/>
<rect x="729.6" y="320.0" width="7.6" height="7.6" fill="#1fb53c"/>
<path d="M730.9,321.3L735.9,326.3M735.9,321.3L730.9,326.3" stroke="#0a4f19" stroke-width="1.2"/>
<rect x="566.2" y="242.2" width="7.6" height="7.6" fill="#1fb53c"/>
<path d="M567.5,243.5L572.5,248.5M572.5,243.5L567.5,248.5" stroke="#0a4f19" stroke-width="1.2"/>
<rect x="553.2" y="260.2" width="7.6" height="7.6" fill="#1fb53c"/>
<path d="M554.5,261.5L559.5,266.5M559.5,261.5L554.5,266.5" stroke="#0a4f19" stroke-width="1.2"/>
<rect x="497.0" y="337.0" width="7.6" height="7.6" fill="#1fb53c"/>
<path d="M498.3,338.3L503.3,343.3M503.3,338.3L498.3,343.3" stroke="#0a4f19" stroke-width="1.2"/>
<rect x="506.8" y="334.8" width="7.6" height="7.6" fill="#1fb53c"/>
<path d="M508.1,336.1L513.1,341.1M513.1,336.1L508.1,341.1" stroke="#0a4f19" stroke-width="1.2"/>
<rect x="516.0" y="337.0" width="7.6" height="7.6" fill="#1fb53c"/>
<path d="M517.3,338.3L522.3,343.3M522.3,338.3L517.3,343.3" stroke="#0a4f19" stroke-width="1.2"/>
<rect x="497.0" y="347.7" width="7.6" height="7.6" fill="#1fb53c"/>
<path d="M498.3,349.0L503.3,354.0M503.3,349.0L498.3,354.0" stroke="#0a4f19" stroke-width="1.2"/>
<rect x="516.0" y="347.7" width="7.6" height="7.6" fill="#1fb53c"/>
<path d="M517.3,349.0L522.3,354.0M522.3,349.0L517.3,354.0" stroke="#0a4f19" stroke-width="1.2"/>
<rect x="506.8" y="353.2" width="7.6" height="7.6" fill="#1fb53c"/>
<path d="M508.1,354.5L513.1,359.5M513.1,354.5L508.1,359.5" stroke="#0a4f19" stroke-width="1.2"/>
<rect x="560.9" y="334.8" width="7.6" height="7.6" fill="#1fb53c"/>
<path d="M562.2,336.1L567.2,341.1M567.2,336.1L562.2,341.1" stroke="#0a4f19" stroke-width="1.2"/>
<rect x="560.9" y="353.2" width="7.6" height="7.6" fill="#1fb53c"/>
<path d="M562.2,354.5L567.2,359.5M567.2,354.5L562.2,359.5" stroke="#0a4f19" stroke-width="1.2"/>
<rect x="605.2" y="316.7" width="7.6" height="7.6" fill="#1fb53c"/>
<path d="M606.5,318.0L611.5,323.0M611.5,318.0L606.5,323.0" stroke="#0a4f19" stroke-width="1.2"/>
<rect x="623.9" y="316.7" width="7.6" height="7.6" fill="#1fb53c"/>
<path d="M625.2,318.0L630.2,323.0M630.2,318.0L625.2,323.0" stroke="#0a4f19" stroke-width="1.2"/>
<rect x="623.9" y="326.1" width="7.6" height="7.6" fill="#1fb53c"/>
<path d="M626.4,326.9V332.9M629.0,326.9V332.9" stroke="#08501a" stroke-width="1"/>
<rect x="603.1" y="334.8" width="7.6" height="7.6" fill="#1fb53c"/>
<path d="M603.9,338.6H609.9" stroke="#08501a" stroke-width="1.6"/>
<rect x="615.1" y="334.8" width="7.6" height="7.6" fill="#1fb53c"/>
<path d="M616.4,336.1L621.4,341.1M621.4,336.1L616.4,341.1" stroke="#0a4f19" stroke-width="1.2"/>
<rect x="633.2" y="334.8" width="7.6" height="7.6" fill="#1fb53c"/>
<path d="M634.5,336.1L639.5,341.1M639.5,336.1L634.5,341.1" stroke="#0a4f19" stroke-width="1.2"/>
<rect x="605.2" y="344.0" width="7.6" height="7.6" fill="#1fb53c"/>
<path d="M606.5,345.3L611.5,350.3M611.5,345.3L606.5,350.3" stroke="#0a4f19" stroke-width="1.2"/>
<rect x="623.9" y="344.0" width="7.6" height="7.6" fill="#1fb53c"/>
<path d="M625.2,345.3L630.2,350.3M630.2,345.3L625.2,350.3" stroke="#0a4f19" stroke-width="1.2"/>
<rect x="615.1" y="353.2" width="7.6" height="7.6" fill="#1fb53c"/>
<path d="M616.4,354.5L621.4,359.5M621.4,354.5L616.4,359.5" stroke="#0a4f19" stroke-width="1.2"/>
<rect x="660.0" y="344.0" width="7.6" height="7.6" fill="#1fb53c"/>
<path d="M661.3,345.3L666.3,350.3M666.3,345.3L661.3,350.3" stroke="#0a4f19" stroke-width="1.2"/>
<rect x="649.0" y="384.5" width="7.6" height="7.6" fill="#1fb53c"/>
<path d="M650.3,385.8L655.3,390.8M655.3,385.8L650.3,390.8" stroke="#0a4f19" stroke-width="1.2"/>
<rect x="581.2" y="383.4" width="7.6" height="7.6" fill="#1fb53c"/>
<path d="M582.5,384.7L587.5,389.7M587.5,384.7L582.5,389.7" stroke="#0a4f19" stroke-width="1.2"/>
<rect x="677.9" y="426.2" width="7.6" height="7.6" fill="#1fb53c"/>
<path d="M679.2,427.5L684.2,432.5M684.2,427.5L679.2,432.5" stroke="#0a4f19" stroke-width="1.2"/>
<rect x="667.2" y="445.5" width="7.6" height="7.6" fill="#1fb53c"/>
<path d="M668.5,446.8L673.5,451.8M673.5,446.8L668.5,451.8" stroke="#0a4f19" stroke-width="1.2"/>
<rect x="624.5" y="482.9" width="7.6" height="7.6" fill="#1fb53c"/>
<path d="M625.8,484.2L630.8,489.2M630.8,484.2L625.8,489.2" stroke="#0a4f19" stroke-width="1.2"/>
<rect x="654.5" y="517.9" width="7.6" height="7.6" fill="#1fb53c"/>
<path d="M655.8,519.2L660.8,524.2M660.8,519.2L655.8,524.2" stroke="#0a4f19" stroke-width="1.2"/>
<rect x="646.2" y="536.2" width="7.6" height="7.6" fill="#1fb53c"/>
<path d="M647.5,537.5L652.5,542.5M652.5,537.5L647.5,542.5" stroke="#0a4f19" stroke-width="1.2"/>
<rect x="574.5" y="537.9" width="7.6" height="7.6" fill="#1fb53c"/>
<path d="M575.8,539.2L580.8,544.2M580.8,539.2L575.8,544.2" stroke="#0a4f19" stroke-width="1.2"/>
<rect x="583.9" y="547.9" width="7.6" height="7.6" fill="#1fb53c"/>
<path d="M584.7,551.7H590.7" stroke="#08501a" stroke-width="1.6"/>
<rect x="516.2" y="547.9" width="7.6" height="7.6" fill="#1fb53c"/>
<path d="M517.5,549.2L522.5,554.2M522.5,549.2L517.5,554.2" stroke="#0a4f19" stroke-width="1.2"/>
<rect x="622.9" y="532.9" width="7.6" height="7.6" fill="#1fb53c"/>
<path d="M623.7,536.7H629.7" stroke="#08501a" stroke-width="1.6"/>
<rect x="622.9" y="542.9" width="7.6" height="7.6" fill="#1fb53c"/>
<path d="M624.2,544.2L629.2,549.2M629.2,544.2L624.2,549.2" stroke="#0a4f19" stroke-width="1.2"/>
<rect x="604.5" y="542.9" width="7.6" height="7.6" fill="#1fb53c"/>
<path d="M607.0,543.7V549.7M609.6,543.7V549.7" stroke="#08501a" stroke-width="1"/>
<rect x="614.5" y="537.9" width="7.6" height="7.6" fill="#1fb53c"/>
<path d="M615.3,541.7H621.3" stroke="#08501a" stroke-width="1.6"/>
<rect x="614.5" y="557.9" width="7.6" height="7.6" fill="#1fb53c"/>
<path d="M615.8,559.2L620.8,564.2M620.8,559.2L615.8,564.2" stroke="#0a4f19" stroke-width="1.2"/>
<rect x="614.5" y="596.9" width="7.6" height="7.6" fill="#1fb53c"/>
<path d="M615.8,598.2L620.8,603.2M620.8,598.2L615.8,603.2" stroke="#0a4f19" stroke-width="1.2"/>
<rect x="779.5" y="556.2" width="7.6" height="7.6" fill="#1fb53c"/>
<path d="M780.3,560.0H786.3" stroke="#08501a" stroke-width="1.6"/>
<path d="M619,320 L616.6,328.5 L621.4,328.5Z" fill="#e3262a"/><line x1="619" y1="328" x2="619" y2="347" stroke="rgba(220,60,60,0.45)" stroke-width="1.2"/><line x1="619" y1="348.6" x2="631" y2="348.6" stroke="rgba(220,60,60,0.5)" stroke-width="1"/>
</svg>
</div></div>
<div id="left" class="a"></div>
<div class="a" style="left:0;top:80px;width:433px;height:20px;background:#474747"></div>
<div class="a" style="left:0px;top:81px;width:49px;height:18px;background:#363636"></div>
<div class="t" style="left:0px;width:49px;text-align:center;top:84.5px;font-size:9.5px;font-weight:normal;color:#dedede">Features</div>
<div class="a" style="left:50px;top:81px;width:44.5px;height:18px;background:#4b4b4b"></div>
<div class="t" style="left:50px;width:44.5px;text-align:center;top:84.5px;font-size:9.5px;font-weight:bold;color:#f4f4f4">Sketch</div>
<div class="a" style="left:95px;top:81px;width:45px;height:18px;background:#363636"></div>
<div class="t" style="left:95px;width:45px;text-align:center;top:84.5px;font-size:9.5px;font-weight:normal;color:#dedede">Markup</div>
<div class="a" style="left:141px;top:81px;width:49px;height:18px;background:#363636"></div>
<div class="t" style="left:141px;width:49px;text-align:center;top:84.5px;font-size:9.5px;font-weight:normal;color:#dedede">Evaluate</div>
<div class="a" style="left:191px;top:81px;width:90px;height:18px;background:#363636"></div>
<div class="t" style="left:191px;width:90px;text-align:center;top:84.5px;font-size:9.5px;font-weight:normal;color:#dedede">MBD Dimensions</div>
<div class="a" style="left:282px;top:81px;width:114px;height:18px;background:#363636"></div>
<div class="t" style="left:282px;width:114px;text-align:center;top:84.5px;font-size:9.5px;font-weight:normal;color:#dedede">SOLIDWORKS Add-Ins</div>
<div class="a" style="left:397px;top:81px;width:35px;height:18px;background:#363636"></div>
<div class="t" style="left:397px;width:35px;text-align:center;top:84.5px;font-size:9.5px;font-weight:normal;color:#dedede">MBD</div>
<div class="a" style="left:0;top:100px;width:181px;height:1px;background:#8a8a8a"></div>
<div class="a" style="left:0;top:101px;width:181px;height:16px;background:#484848"></div>
<div class="a" style="left:87px;top:106.5px;width:5px;height:5px;border-radius:50%;background:#d6d6d6"></div>
<div class="a" style="left:0;top:116.5px;width:181px;height:1px;background:#6e6e6e"></div>
<div class="a" style="left:0;top:117px;width:1px;height:541px;background:#9a9a9a"></div>
<div class="a" style="left:28px;top:119.5px;width:26px;height:16px;background:#343434"></div>
<div class="a" style="left:55px;top:119.5px;width:26px;height:16px;background:#343434"></div>
<div class="a" style="left:82px;top:119.5px;width:25px;height:16px;background:#343434"></div>
<div class="a" style="left:108px;top:119.5px;width:26.5px;height:16px;background:#343434"></div>
<svg class="a" style="left:8px;top:119px" width="14" height="16" viewBox="0 0 14 16"><path d="M5,2 Q9,0 11,4 L13,9 Q14,14 9,15 Q4,15 2,11 Q1,6 5,2Z" fill="#e9c23a"/><path d="M6,5 L9,9 L7,12" stroke="#8a6a10" stroke-width="1.2" fill="none"/></svg>
<svg class="a" style="left:34px;top:120px" width="14" height="14" viewBox="0 0 14 14"><rect x="0.5" y="0.5" width="13" height="13" fill="#f4f4f4"/><rect x="0.5" y="0.5" width="13" height="3" fill="#3b8ccc"/><path d="M0.5,3.5 V13.5 M4,5 H13 M4,8 H13 M4,11 H13 M2,5 V13" stroke="#4a90c8" stroke-width="1.1"/></svg>
<svg class="a" style="left:62px;top:120px" width="12" height="14" viewBox="0 0 12 14"><path d="M2,1 V13 M2,4 H7 M2,11 H7" stroke="#eee" stroke-width="1.3"/><rect x="7" y="2" width="4" height="4" fill="#eee"/><rect x="7" y="9" width="4" height="4" fill="#eee"/></svg>
<svg class="a" style="left:87px;top:120px" width="15" height="15" viewBox="0 0 15 15"><path d="M7.5,0.5 L14.5,7.5 L7.5,14.5 L0.5,7.5Z" fill="none" stroke="#ccc" stroke-width="1"/><circle cx="7.5" cy="7.5" r="4" fill="none" stroke="#ddd" stroke-width="1.2"/><path d="M7.5,1 V14 M1,7.5 H14" stroke="#ddd" stroke-width="1"/></svg>
<svg class="a" style="left:114px;top:120px" width="15" height="15" viewBox="0 0 15 15"><circle cx="7.5" cy="7.5" r="7" fill="#e8a41e"/><path d="M7.5,7.5 L7.5,0.5 A7,7 0 0,0 0.5,7.5Z" fill="#3f8fd2"/><path d="M7.5,7.5 L0.5,7.5 A7,7 0 0,0 7.5,14.5Z" fill="#43a845"/><path d="M7.5,7.5 L7.5,0.5 A7,7 0 0,1 14.5,7.5Z" fill="#d33a2f"/><path d="M3,3 L12,12" stroke="#222" stroke-width="1.6"/></svg>
<svg class="a" style="left:170px;top:123px" width="6" height="9"><path d="M1,1 L5,4.5 L1,8" stroke="#e6e6e6" stroke-width="1.5" fill="none"/></svg>
<div class="a" style="left:3px;top:136.5px;width:175px;height:21px;background:#545454;border:1px solid #6e6e6e"></div>
<svg class="a" style="left:5px;top:141px" width="11" height="11" viewBox="0 0 11 11"><path d="M0.5,0.5 H10.5 L6.5,5 V10.5 H4.5 V5Z" fill="#f2f2f2"/><path d="M0.5,0.5 H10.5 L9.5,2 H1.5Z" fill="#3a8ad0"/></svg>
<svg class="a" style="left:2px;top:159px" width="14" height="15" viewBox="0 0 14 15"><rect x="0.5" y="4" width="5" height="10" rx="1.5" fill="#222" stroke="#999" stroke-width="0.7"/><circle cx="3" cy="6.5" r="1.3" fill="#d33"/><circle cx="3" cy="11" r="1.3" fill="#4b4"/><path d="M6,3 Q9,0 11,3 L13,8 Q14,13 9,14 Q6,14 5,12Z" fill="#e9c23a"/></svg>
<div class="t" style="left:17px;width:34px;text-align:right;top:160.5px;font-size:9.3px;color:#e4e4e4" dir="rtl">مشروع ١</div>
<div class="t" style="left:57px;top:160px;font-size:10.3px;color:#e4e4e4;width:124px;overflow:hidden">(Default&lt;&lt;Default&gt;_Display State 1&gt;)</div>
<div class="t" style="left:33.5px;top:176.5px;font-size:10.3px;color:#e2e2e2">History</div>
<div class="t" style="left:33.5px;top:192.5px;font-size:10.3px;color:#e2e2e2">Sensors</div>
<div class="t" style="left:33.5px;top:208.5px;font-size:10.3px;color:#e2e2e2">Annotations</div>
<div class="t" style="left:33.5px;top:224.5px;font-size:10.3px;color:#e2e2e2">Material &lt;not specified&gt;</div>
<div class="t" style="left:33.5px;top:240.5px;font-size:10.3px;color:#e2e2e2">Front Plane</div>
<div class="t" style="left:33.5px;top:256.5px;font-size:10.3px;color:#e2e2e2">Top Plane</div>
<div class="t" style="left:33.5px;top:272.5px;font-size:10.3px;color:#e2e2e2">Right Plane</div>
<div class="t" style="left:33.5px;top:288.5px;font-size:10.3px;color:#e2e2e2">Origin</div>
<div class="t" style="left:33.5px;top:304.5px;font-size:10.3px;color:#e2e2e2">Sketch1</div>
<svg class="a" style="left:6px;top:179px" width="5" height="8"><path d="M0.5,0.5 L4.5,4 L0.5,7.5Z" fill="#e6e6e6"/></svg>
<svg class="a" style="left:6px;top:211px" width="5" height="8"><path d="M0.5,0.5 L4.5,4 L0.5,7.5Z" fill="#e6e6e6"/></svg>
<svg class="a" style="left:19px;top:177px" width="12" height="13" viewBox="0 0 12 13"><rect x="0.5" y="2" width="10" height="9" fill="#e8eef2"/><rect x="0.5" y="0.5" width="4" height="2" fill="#ccc"/><path d="M3,8 L6,5 M5,8 H8 V5" stroke="#3a8aa0" stroke-width="1.3" fill="none"/></svg>
<svg class="a" style="left:19px;top:193px" width="12" height="13" viewBox="0 0 12 13"><rect x="0.5" y="2" width="10" height="9" fill="#e8e8e8"/><rect x="0.5" y="0.5" width="4" height="2" fill="#ccc"/><circle cx="5.5" cy="6.5" r="2.5" fill="#c43" /><circle cx="5.5" cy="6.5" r="1" fill="#eee"/></svg>
<svg class="a" style="left:19px;top:209px" width="12" height="13" viewBox="0 0 12 13"><rect x="0.5" y="2" width="10" height="9" fill="#d8e4ee"/><rect x="0.5" y="0.5" width="4" height="2" fill="#ccc"/><path d="M3,10 L5.5,4 L8,10" stroke="#3f7fb0" stroke-width="1.4" fill="none"/></svg>
<svg class="a" style="left:19px;top:225px" width="12" height="13" viewBox="0 0 12 13"><path d="M0,1 H11 M0,4 H11 M0,7 H8" stroke="#ddd" stroke-width="1.2"/><circle cx="1" cy="7" r="1.2" fill="#e6d33a"/><circle cx="8.5" cy="9.5" r="2.5" fill="#222" stroke="#ccc" stroke-width="0.8"/></svg>
<svg class="a" style="left:19px;top:241px" width="12" height="13" viewBox="0 0 12 13"><path d="M2,3 L6,0.5 V10 L2,12.5Z" fill="#9a9a9a"/><path d="M6,0.5 L10,2 V11 L6,10Z" fill="#bdbdbd"/></svg>
<svg class="a" style="left:19px;top:257px" width="12" height="13" viewBox="0 0 12 13"><path d="M2,3 L6,0.5 V10 L2,12.5Z" fill="#9a9a9a"/><path d="M6,0.5 L10,2 V11 L6,10Z" fill="#bdbdbd"/></svg>
<svg class="a" style="left:19px;top:273px" width="12" height="13" viewBox="0 0 12 13"><path d="M2,3 L6,0.5 V10 L2,12.5Z" fill="#9a9a9a"/><path d="M6,0.5 L10,2 V11 L6,10Z" fill="#bdbdbd"/></svg>
<svg class="a" style="left:19px;top:289px" width="12" height="13" viewBox="0 0 12 13"><path d="M2,0.5 V11 H11" stroke="#ddd" stroke-width="1.2" fill="none"/><path d="M0.5,9.5 L2,11" stroke="#ddd" stroke-width="1"/></svg>
<svg class="a" style="left:19px;top:305px" width="12" height="13" viewBox="0 0 12 13"><rect x="0.5" y="0.5" width="10" height="11" fill="#f0f0f0"/><rect x="0.5" y="0.5" width="10" height="2.5" fill="#3a8ad0"/><rect x="1.5" y="5" width="3" height="6" rx="1" fill="#222"/><circle cx="3" cy="6.5" r="0.9" fill="#d33"/><circle cx="3" cy="9.5" r="0.9" fill="#4b4"/></svg>
<div class="a" style="left:0;top:318px;width:181px;height:2px;background:#b9bdc2"></div>
<div class="a" style="left:181px;top:352px;width:8px;height:33px;background:#3c3c3c"></div>
<div class="a" style="left:183px;top:366.5px;width:4px;height:4px;border-radius:50%;background:#ddd"></div>
<div class="a" style="left:1px;top:640px;width:179px;height:16px;background:#f0f0f0"></div>
<div class="a" style="left:15px;top:641px;width:120px;height:14px;background:#cdcdcd"></div>
<svg class="a" style="left:5px;top:644px" width="6" height="9"><path d="M5,1 L1.5,4.5 L5,8" stroke="#555" stroke-width="1.3" fill="none"/></svg>
<svg class="a" style="left:170px;top:644px" width="6" height="9"><path d="M1,1 L4.5,4.5 L1,8" stroke="#555" stroke-width="1.3" fill="none"/></svg>
<svg class="a" style="left:611.8px;top:83.7px" width="15" height="15" viewBox="0 0 15 15"><circle cx="9" cy="6" r="4.5" fill="#cfe3f0" stroke="#5a8fb0" stroke-width="1.4"/><path d="M6,9 L1.5,13.5" stroke="#4f83a6" stroke-width="2.2"/><path d="M7,6 H11 M9,4 V8" stroke="#4f83a6" stroke-width="1"/></svg>
<svg class="a" style="left:629.1px;top:83.7px" width="15" height="15" viewBox="0 0 15 15"><rect x="5" y="1" width="9" height="9" fill="none" stroke="#7a9cb5" stroke-width="1" stroke-dasharray="2,1"/><circle cx="8.5" cy="6" r="4" fill="#dbeaf4" stroke="#5a8fb0" stroke-width="1.3"/><path d="M5.5,9 L1.5,13.5" stroke="#4f83a6" stroke-width="2.2"/></svg>
<svg class="a" style="left:646.3px;top:83.7px" width="15" height="15" viewBox="0 0 15 15"><path d="M2,12 L12,3 L14,5 L5,13Z" fill="#c9dcea" stroke="#5a8fb0" stroke-width="1"/><path d="M1,9 L6,4" stroke="#8aa" stroke-width="1.5"/><path d="M7,13 H14" stroke="#4f83a6" stroke-width="1.6"/></svg>
<svg class="a" style="left:663.5px;top:83.7px" width="15" height="15" viewBox="0 0 15 15"><path d="M1,3 L7,1 V13 L1,14Z" fill="#8fb4cf"/><path d="M7,1 L14,3 V14 L7,13Z" fill="#4f83a6"/><path d="M4,3 V13 M10,2 V13" stroke="#dfeaf2" stroke-width="1"/></svg>
<svg class="a" style="left:680.9px;top:83.7px" width="15" height="15" viewBox="0 0 15 15"><path d="M2,13 L12,2" stroke="#e2b46a" stroke-width="2.3"/><path d="M4,4 L13,13" stroke="#8a9aa6" stroke-width="2"/><circle cx="11" cy="3" r="2.3" fill="#efc66a"/><path d="M1,8 L5,12" stroke="#d98a6a" stroke-width="1.6"/></svg>
<svg class="a" style="left:698.1px;top:83.7px" width="15" height="15" viewBox="0 0 15 15"><rect x="1" y="3" width="11" height="11" fill="#8fc0e0" stroke="#4f83a6" stroke-width="1"/><rect x="6" y="1" width="8" height="8" fill="#d7e8f3" stroke="#4f83a6" stroke-width="1"/><path d="M8,5 L12,5 L12,9" stroke="#333" stroke-width="1" fill="none"/></svg>
<svg class="a" style="left:716.8px;top:90.0px" width="4" height="3"><path d="M0,0 H4 L2,2.5Z" fill="#888"/></svg>
<svg class="a" style="left:725.5px;top:83.7px" width="15" height="15" viewBox="0 0 15 15"><path d="M3,3 L9,1 L14,3 V12 L8,14 L3,12Z" fill="#a9cfe6" stroke="#6a9cbc" stroke-width="1"/><path d="M3,3 L8,5 L14,3 M8,5 V14" stroke="#e9f3fa" stroke-width="1.1" fill="none"/></svg>
<svg class="a" style="left:743.5px;top:90.0px" width="4" height="3"><path d="M0,0 H4 L2,2.5Z" fill="#888"/></svg>
<svg class="a" style="left:752.0px;top:83.7px" width="15" height="15" viewBox="0 0 15 15"><path d="M1,7.5 Q7.5,2 14,7.5 Q7.5,13 1,7.5Z" fill="#d4d4d4"/><circle cx="7.5" cy="7.5" r="2.5" fill="#7a7a7a"/><path d="M7.5,3 V14" stroke="#777" stroke-width="1"/></svg>
<svg class="a" style="left:770px;top:90.0px" width="4" height="3"><path d="M0,0 H4 L2,2.5Z" fill="#888"/></svg>
<svg class="a" style="left:778.4px;top:83.7px" width="15" height="15" viewBox="0 0 15 15"><circle cx="7.5" cy="7.5" r="6" fill="#dedede"/><circle cx="6" cy="6" r="3" fill="#ebebeb"/></svg>
<svg class="a" style="left:795.5px;top:83.7px" width="15" height="15" viewBox="0 0 15 15"><path d="M2,14 L2,8 Q2,1 7.5,1 Q13,1 13,8 V14Z" fill="#3fa34d"/><path d="M2,8 Q2,1 7.5,1 V8Z" fill="#d8413a"/><path d="M7.5,1 Q13,1 13,8 H7.5Z" fill="#3a7ec8"/><rect x="2" y="10" width="11" height="4" fill="#555"/><path d="M3,13 L6,10 M7,13 L10,10" stroke="#e5c33c" stroke-width="1.2"/></svg>
<svg class="a" style="left:814.5px;top:90.0px" width="4" height="3"><path d="M0,0 H4 L2,2.5Z" fill="#888"/></svg>
<svg class="a" style="left:822.0px;top:83.7px" width="15" height="15" viewBox="0 0 15 15"><rect x="1" y="1.5" width="13" height="9" fill="#e8e8e8" stroke="#6a6a6a" stroke-width="1.1"/><path d="M7.5,11 V13.5 M4,13.5 H11" stroke="#6a6a6a" stroke-width="1.3"/></svg>
<svg class="a" style="left:841px;top:90.0px" width="4" height="3"><path d="M0,0 H4 L2,2.5Z" fill="#888"/></svg>
<svg class="a" style="left:1192px;top:86px" width="80" height="12" viewBox="0 0 80 12"><rect x="1.5" y="1.5" width="7.5" height="9" fill="none" stroke="#8a8a8a" stroke-width="1"/><path d="M6,4 L3.5,6 L6,8Z" fill="#8a8a8a"/><rect x="18.5" y="1.5" width="7.5" height="9" fill="none" stroke="#8a8a8a" stroke-width="1"/><path d="M21,4 L23.5,6 L21,8Z" fill="#8a8a8a"/><path d="M35,9.5 H44" stroke="#8a8a8a" stroke-width="1.2"/><rect x="52.5" y="4.5" width="6.5" height="6" fill="none" stroke="#8a8a8a" stroke-width="1"/><path d="M55,4 V1.5 H62.5 V7.5 H59.5" fill="none" stroke="#8a8a8a" stroke-width="1"/><path d="M71.5,1.5 L78,8.5 M78,1.5 L71.5,8.5" stroke="#9a9a9a" stroke-width="1"/></svg>
<svg class="a" style="left:1205px;top:103px" width="52" height="40" viewBox="0 0 52 40"><path d="M2.5,1.5 H13 M2.5,1.5 V12 Q2.5,17 8,17 H16" fill="none" stroke="#b9c4cc" stroke-width="1.2"/><path d="M31,9 Q30,17 22,18 L24,24 L15,16.5 L23,9 L22,14 Q27,13 31,9Z" fill="#cfe0ea"/><path d="M34,23 L48,37 M48,23 L34,37" stroke="#ecc4c4" stroke-width="4.2"/></svg>
<div class="a" style="left:1278px;top:81px;width:2px;height:577px;background:#8c8c8c"></div>
<div class="a" style="left:1258px;top:120px;width:22px;height:139px;background:#2f2f2f"></div>
<div class="a" style="left:1258px;top:120px;width:22px;height:20px;background:#b8b8b8"></div>
<div class="a" style="left:1258px;top:159.5px;width:22px;height:1px;background:#555"></div>
<div class="a" style="left:1258px;top:179.3px;width:22px;height:1px;background:#555"></div>
<div class="a" style="left:1258px;top:199px;width:22px;height:1px;background:#555"></div>
<div class="a" style="left:1258px;top:219px;width:22px;height:1px;background:#555"></div>
<div class="a" style="left:1258px;top:239px;width:22px;height:1px;background:#555"></div>
<svg class="a" style="left:1261.5px;top:122.5px" width="15" height="15" viewBox="0 0 15 15"><circle cx="7.5" cy="7.5" r="7" fill="#16486e"/><circle cx="7.5" cy="7.5" r="5" fill="#2a6a9a"/><path d="M4,5 Q7.5,3 11,5 M3.5,9 Q7.5,11 11.5,9 M7.5,2 V13" stroke="#9cc6e6" stroke-width="0.9" fill="none"/></svg>
<svg class="a" style="left:1261.5px;top:142.0px" width="15" height="15" viewBox="0 0 15 15"><path d="M7.5,1 L14,7 H12 V14 H3 V7 H1Z" fill="#e8eef2"/><path d="M7.5,1 L14,7 H11 L7.5,4 L4,7 H1Z" fill="#3d87b8"/><rect x="6" y="10" width="3" height="4" fill="#2f2f2f"/></svg>
<svg class="a" style="left:1261.5px;top:162.0px" width="15" height="15" viewBox="0 0 15 15"><path d="M3,4 Q7.5,1 12,4 V13 Q7.5,15 3,13Z" fill="#e6e6e6"/><path d="M5.5,3.5 V13.5 M7.5,3 V14 M9.5,3.5 V13.5" stroke="#777" stroke-width="0.8"/></svg>
<svg class="a" style="left:1261.5px;top:182.0px" width="15" height="15" viewBox="0 0 15 15"><path d="M1,3 H6 L7,5 H13 V13 H1Z" fill="#bdbdbd"/><path d="M1,13 L4,7 H15 L12,13Z" fill="#f0f0f0"/></svg>
<svg class="a" style="left:1261.5px;top:202.0px" width="15" height="15" viewBox="0 0 15 15"><rect x="1" y="2" width="13" height="11" fill="#e6c84a"/><path d="M3,4 H12 L3,11 H12Z" fill="none" stroke="#444" stroke-width="1.2"/></svg>
<svg class="a" style="left:1261.5px;top:222.0px" width="15" height="15" viewBox="0 0 15 15"><circle cx="7.5" cy="7.5" r="6.5" fill="#3f8fd2"/><path d="M7.5,7.5 L1,7.5 A6.5,6.5 0 0,1 7.5,1Z" fill="#d33a2f"/><path d="M7.5,7.5 L7.5,14 A6.5,6.5 0 0,1 1,7.5Z" fill="#43a845"/><path d="M7.5,7.5 L14,7.5 A6.5,6.5 0 0,1 7.5,14Z" fill="#e8c21e"/><circle cx="7.5" cy="7.5" r="2.5" fill="#fff"/></svg>
<svg class="a" style="left:1261.5px;top:242.0px" width="15" height="15" viewBox="0 0 15 15"><rect x="1" y="1" width="13" height="13" fill="#f0f0f0"/><rect x="1" y="1" width="13" height="3" fill="#3a8ad0"/><path d="M4,6 H13 M4,9 H13 M4,12 H13 M2.5,5 V13" stroke="#3a8ad0" stroke-width="1"/></svg>
<div class="a" style="left:1258px;top:259px;width:19px;height:1px;background:#ddd"></div>
<svg class="a" style="left:205px;top:575px" width="50" height="45" viewBox="0 0 50 45"><path d="M10,38 V18" stroke="#1fa32a" stroke-width="2.2"/><path d="M6.5,20 L10,12 L13.5,20Z" fill="#1fa32a"/><path d="M10,38 H28" stroke="#b3121b" stroke-width="2.2"/><path d="M26,34.5 L34.5,38 L26,41.5Z" fill="#b3121b"/><circle cx="10" cy="38" r="2.6" fill="#1020a8"/><text x="11" y="9" font-size="7" fill="#5cc060" text-anchor="middle">Y</text><text x="40.5" y="40" font-size="7" fill="#d98080" text-anchor="middle">X</text></svg>
<div class="t" style="left:188.5px;top:644.5px;font-size:10.8px;font-weight:bold;color:#111;letter-spacing:-0.2px">*Front</div>
<div class="a" style="left:0;top:658px;width:1280px;height:14px;background:#4a4a4a"></div>
<div class="a" style="left:0;top:658px;width:55px;height:14px;background:#9c9fb3"></div>
<div class="a" style="left:0.5px;top:659px;width:12.5px;height:12px;background:#a9acbf;border:1px solid #8d90a6"></div>
<div class="a" style="left:14.2px;top:659px;width:12.5px;height:12px;background:#a9acbf;border:1px solid #8d90a6"></div>
<div class="a" style="left:27.9px;top:659px;width:12.5px;height:12px;background:#a9acbf;border:1px solid #8d90a6"></div>
<div class="a" style="left:41.599999999999994px;top:659px;width:12.5px;height:12px;background:#a9acbf;border:1px solid #8d90a6"></div>
<svg class="a" style="left:0;top:659px" width="55" height="12" viewBox="0 0 55 12"><path d="M3.5,3 V9 M9,3 L5,6 L9,9Z M22,3 L18,6 L22,9Z M31.5,3 L35.5,6 L31.5,9Z M45,3 L49,6 L45,9Z M50.5,3 V9" stroke="#7b7e95" fill="#7b7e95" stroke-width="1"/></svg>
<div class="a" style="left:56px;top:658px;width:49px;height:14px;background:#3e3e3e"></div>
<div class="t" style="left:21px;width:120px;text-align:center;top:659.5px;font-size:10.5px;color:#f0f0f0;font-weight:bold">Model</div>
<div class="a" style="left:106px;top:658px;width:59px;height:14px;background:#343434"></div>
<div class="t" style="left:75.5px;width:120px;text-align:center;top:659.5px;font-size:10.5px;color:#d8d8d8;font-weight:normal">3D Views</div>
<div class="a" style="left:166px;top:658px;width:94px;height:14px;background:#343434"></div>
<div class="t" style="left:150px;width:120px;text-align:center;top:659.5px;font-size:10.5px;color:#d8d8d8;font-weight:normal">Motion Study 1</div>
<div class="a" style="left:0;top:672px;width:1280px;height:15px;background:#464646;border-top:1px solid #707070"></div>
<div class="t" style="left:1px;top:676px;font-size:10px;color:#e2e2e2">Select one or two edges/vertices and then a text location.</div>
<div class="t" style="left:866px;top:676px;font-size:9.7px;color:#e2e2e2">197.4in</div>
<div class="t" style="left:918.5px;top:676px;font-size:9.7px;color:#e2e2e2">55.78in</div>
<div class="t" style="left:963.5px;top:676px;font-size:9.7px;color:#e2e2e2">0ir Fully Defined</div>
<div class="t" style="left:1048px;top:676px;font-size:9.7px;color:#e2e2e2">Editing Sketch1</div>
<div class="t" style="left:1207px;top:676px;font-size:9.7px;color:#e2e2e2">IPS</div>
<div class="a" style="left:1131px;top:673px;width:1px;height:13px;background:#888"></div>
<svg class="a" style="left:1245px;top:678px" width="6" height="4"><path d="M0,3.5 H6 L3,0Z" fill="#e6e6e6"/></svg>
<div class="a" style="left:0;top:686.5px;width:1280px;height:33.5px;background:#1e2c38"></div>
<div class="a" style="left:453px;top:686.5px;width:41px;height:33.5px;background:#3a4752"></div>
<div class="a" style="left:453px;top:718px;width:41px;height:2px;background:#8ab8e6"></div>
<svg class="a" style="left:12.5px;top:695.5px" width="15" height="15" viewBox="0 0 15 15"><path d="M0.5,2 L6.5,1.2 V7 H0.5Z M7.5,1 L14.5,0 V7 H7.5Z M0.5,8 H6.5 V13.8 L0.5,13Z M7.5,8 H14.5 V15 L7.5,14Z" fill="#f4f4f4"/></svg>
<svg class="a" style="left:52.5px;top:695.5px" width="15" height="15" viewBox="0 0 15 15"><circle cx="9" cy="6" r="4.6" fill="none" stroke="#f0f0f0" stroke-width="1.3"/><path d="M5.6,9.4 L1,14" stroke="#f0f0f0" stroke-width="1.5"/></svg>
<svg class="a" style="left:91.5px;top:695.5px" width="16" height="15" viewBox="0 0 16 15"><rect x="2" y="3" width="8" height="9" fill="none" stroke="#eee" stroke-width="1.2"/><path d="M0,1 H12 M0,14 H12 M14,1 V14" stroke="#eee" stroke-width="1.2"/><circle cx="14" cy="7.5" r="1.2" fill="#eee"/></svg>
<svg class="a" style="left:132.0px;top:692.5px" width="21" height="21" viewBox="0 0 21 21"><circle cx="10" cy="10" r="9.5" fill="#1f6fc4"/><path d="M2,8 Q4,1 11,1 Q19,1 19.5,9 Q19,13 15,13 H8 Q9,17 14,17 Q17,17 19,15 Q16,20 10,20 Q1,19 1,11Z" fill="#2fa8e0"/><path d="M8,13 Q8,8 13,8 Q16,8 17,10 Q15,4 9,5 Q4,7 5,13 Q6,17 10,19 Q8,16 8,13Z" fill="#54d18a"/></svg>
<svg class="a" style="left:173.5px;top:693.0px" width="20" height="20" viewBox="0 0 20 20"><path d="M1,3 H8 L10,5 H19 V17 H1Z" fill="#e8b83a"/><path d="M1,7 H19 V17 H1Z" fill="#f7d46a"/><rect x="6" y="11" width="8" height="6" fill="#2f86d6"/><rect x="8" y="13" width="4" height="4" fill="#f7d46a"/></svg>
<svg class="a" style="left:215.0px;top:693.0px" width="20" height="20" viewBox="0 0 20 20"><path d="M6,5 V2.5 Q6,1 8,1 H12 Q14,1 14,2.5 V5" fill="none" stroke="#3aa0d8" stroke-width="1.4"/><rect x="1" y="5" width="18" height="14" rx="2" fill="#f2f2f2"/><rect x="6" y="8" width="3.6" height="3.6" fill="#e74c3c"/><rect x="10.4" y="8" width="3.6" height="3.6" fill="#2ecc71"/><rect x="6" y="12.4" width="3.6" height="3.6" fill="#3498db"/><rect x="10.4" y="12.4" width="3.6" height="3.6" fill="#f1c40f"/></svg>
<svg class="a" style="left:256.6px;top:693.0px" width="20" height="20" viewBox="0 0 20 20"><circle cx="10" cy="10" r="9.5" fill="#db4437"/><path d="M10,10 L18.2,14.8 A9.5,9.5 0 0,1 5,18.1Z" fill="#0f9d58"/><path d="M10,10 L5,18.1 A9.5,9.5 0 0,1 1.8,5.2Z" fill="#0f9d58"/><path d="M10,10 L18.2,14.8 A9.5,9.5 0 0,0 19.2,6 L10,6Z" fill="#f4b400"/><path d="M10,10 L1.8,5.2 A9.5,9.5 0 0,1 10,0.5Z" fill="#db4437"/><circle cx="10" cy="10" r="4.6" fill="#fff"/><circle cx="10" cy="10" r="3.6" fill="#4285f4"/></svg>
<svg class="a" style="left:298.5px;top:693.5px" width="19" height="19" viewBox="0 0 19 19"><circle cx="9.5" cy="9.5" r="9" fill="#2ca5e0"/><path d="M4,9.5 L14.5,5 L12.5,14.5 L9.5,12 L8,13.5 L8.2,11 L13,6.8 L7,10.5Z" fill="#fff"/></svg>
<svg class="a" style="left:336.0px;top:692.5px" width="23" height="23" viewBox="0 0 23 23"><path d="M10,1.5 A8.5,8.5 0 1,1 4,16.5 L1.5,18.5 L2.5,14.5 A8.5,8.5 0 0,1 10,1.5Z" fill="none" stroke="#25c863" stroke-width="2"/><path d="M7,6 Q6,9 9,12 Q12,15 14,13 L12.5,11.5 L11,12 L8.5,9.5 L9,8 L7.5,6Z" fill="#25c863"/><circle cx="16" cy="17" r="5.5" fill="#2a2a2a" stroke="#bbb" stroke-width="0.8"/><path d="M13.5,14.5 H18.5 M16,14.5 V20" stroke="#fff" stroke-width="1.2"/></svg>
<svg class="a" style="left:380.3px;top:693.5px" width="20" height="19" viewBox="0 0 20 19"><rect x="1" y="3" width="18" height="13" rx="4" fill="#ee1d2a"/><path d="M8,6.5 L13.5,9.5 L8,12.5Z" fill="#fff"/></svg>
<svg class="a" style="left:422.0px;top:693.0px" width="20" height="20" viewBox="0 0 20 20"><rect x="0" y="0" width="20" height="20" fill="#1877f2"/><path d="M11,20 V12 H13.7 L14.1,9 H11 V7.2 Q11,6 12.3,6 H14.2 V3.3 Q13,3.1 11.7,3.1 Q8,3.1 8,7 V9 H5.5 V12 H8 V20Z" fill="#fff"/></svg>
<svg class="a" style="left:463.0px;top:691.5px" width="21" height="21" viewBox="0 0 21 21"><path d="M3,5 L10,1 L18,3 V15 L11,19 L3,17Z" fill="#d52b2b"/><path d="M10,1 L18,3 L11,6 L3,5Z" fill="#f05a5a"/><path d="M11,6 V19 L18,15 V3Z" fill="#a81c1c"/><text x="7" y="14" font-size="8" font-weight="bold" fill="#fff" text-anchor="middle" font-family="Liberation Sans">S</text><text x="14.5" y="13" font-size="7" font-weight="bold" fill="#fff" text-anchor="middle" font-family="Liberation Sans">W</text><text x="14" y="19.5" font-size="4" font-weight="bold" fill="#fff" text-anchor="middle" font-family="Liberation Sans">2021</text></svg>
<svg class="a" style="left:953.0px;top:695.0px" width="16" height="16" viewBox="0 0 16 16"><path d="M2,5 L7,2 L12,4 V11 L7,13 L2,11Z" fill="#d52b2b"/><path d="M7,12 L9.5,14.5 L15,8" stroke="#2ecc40" stroke-width="1.8" fill="none"/></svg>
<svg class="a" style="left:974.5px;top:695.0px" width="16" height="16" viewBox="0 0 16 16"><path d="M2,4 L8,1.5 L14,3.5 V12 L8,14.5 L2,12Z" fill="#d52b2b"/><path d="M8,5 V14 M2,4 L8,5 L14,3.5" stroke="#8a1010" stroke-width="0.8" fill="none"/></svg>
<svg class="a" style="left:994.5px;top:695.0px" width="16" height="16" viewBox="0 0 16 16"><circle cx="8" cy="8" r="7.5" fill="#0c0c0c"/><text x="8" y="11" font-size="7" fill="#fff" text-anchor="middle" font-family="Liberation Sans">B6</text></svg>
<svg class="a" style="left:1014.3px;top:695.0px" width="16" height="16" viewBox="0 0 16 16"><ellipse cx="8" cy="9" rx="7" ry="3.5" fill="#2d8a36" transform="rotate(-25 8 9)"/><ellipse cx="9" cy="7" rx="5" ry="2.5" fill="#f2c12e" transform="rotate(-25 9 7)"/><circle cx="6" cy="10" r="2" fill="#3a6fc0"/></svg>
<svg class="a" style="left:1034.3px;top:695.0px" width="16" height="16" viewBox="0 0 16 16"><ellipse cx="8" cy="8" rx="5.5" ry="7.5" fill="#1e88e5"/><path d="M5.5,5.5 L10.5,10.5 L8,12.5 V3.5 L10.5,5.5 L5.5,10.5" stroke="#fff" stroke-width="1" fill="none"/></svg>
<svg class="a" style="left:1054.2px;top:695.0px" width="16" height="16" viewBox="0 0 16 16"><circle cx="8" cy="8" r="7.5" fill="#bfe2f5"/><circle cx="8" cy="8" r="5.5" fill="#2f8fd0"/><path d="M5,11 L9,7 M8,5 Q11,4 11,7" stroke="#fff" stroke-width="1.5" fill="none"/></svg>
<svg class="a" style="left:1074.0px;top:695.0px" width="16" height="16" viewBox="0 0 16 16"><path d="M8,1 L14,3 V8 Q14,13 8,15 Q2,13 2,8 V3Z" fill="#f0f0f0"/><path d="M8,1 V15 M2,7 H14" stroke="#888" stroke-width="0.8"/><path d="M10,9 L14.5,15.5 H5.5Z" fill="#f2b400"/></svg>
<svg class="a" style="left:1093.5px;top:695.0px" width="17" height="16" viewBox="0 0 17 16"><rect x="1" y="4" width="15" height="9" fill="#f0f0f0"/><rect x="2.5" y="5.5" width="12" height="6" fill="#d0d0d0"/><path d="M3,2.5 V4 M6,2.5 V4" stroke="#f0f0f0" stroke-width="1"/></svg>
<svg class="a" style="left:1115.0px;top:695.0px" width="16" height="16" viewBox="0 0 16 16"><path d="M2,14 Q2,4 14,2" stroke="#d6d6d6" stroke-width="1.3" fill="none"/><path d="M5,14 Q5,7 14,5.5" stroke="#d6d6d6" stroke-width="1.3" fill="none"/><path d="M8,14 Q8,10 14,9" stroke="#d6d6d6" stroke-width="1.3" fill="none"/><circle cx="12" cy="13" r="1.3" fill="#d6d6d6"/></svg>
<svg class="a" style="left:1135.2px;top:695.0px" width="16" height="16" viewBox="0 0 16 16"><path d="M1,6 H4 L8,2.5 V13.5 L4,10 H1Z" fill="none" stroke="#e6e6e6" stroke-width="1.2"/><path d="M10.5,5.5 Q12,8 10.5,10.5 M12.5,3.5 Q15,8 12.5,12.5" stroke="#e6e6e6" stroke-width="1.2" fill="none"/></svg>
<div class="t" style="left:1161px;top:696px;font-size:12px;color:#e6e6e6;font-family:'Liberation Sans',sans-serif">ع</div>
<div class="t" style="left:1193px;top:690px;font-size:10.5px;color:#eeeeee">01:35 <span style="font-size:9.5px">م</span></div>
<div class="t" style="left:1182px;width:52px;text-align:center;top:705px;font-size:9.5px;color:#eeeeee;letter-spacing:-0.3px">٢٠٢٥/٠٨/٢٠</div>
<svg class="a" style="left:1243.5px;top:691.5px" width="21" height="21" viewBox="0 0 21 21"><path d="M2,1 H16 V13 H8 L4,17 V13 H2Z" fill="#f0f0f0"/><path d="M5,4.5 H13 M5,7 H13 M5,9.5 H11" stroke="#555" stroke-width="1"/><circle cx="14.5" cy="14" r="5" fill="#1e2c38" stroke="#f0f0f0" stroke-width="1"/><text x="14.5" y="16.5" font-size="6" fill="#fff" text-anchor="middle">١٤</text></svg>
<svg class="a" style="left:555px;top:628px" width="170" height="80" viewBox="0 0 170 80"><g opacity="0.62"><g fill="none" stroke="#b4b6ba" stroke-width="7.5" stroke-linecap="round"><path d="M32.3,8 V39"/><path d="M32,39 H142" stroke-width="8.5"/><path d="M12,25 Q8.5,30 8.5,39 Q9,50.5 20,50.5 Q32,50.5 32.3,39"/><circle cx="59.5" cy="30.5" r="7.5" stroke-width="6.5"/><path d="M104.5,39 V34 M116,39 V34 M128,39 V34" stroke-width="6.5"/><circle cx="150.5" cy="38.5" r="9.2" stroke-width="7.5"/></g><g fill="#b4b6ba"><circle cx="54" cy="11" r="4.3"/><circle cx="64.6" cy="11" r="4.3"/><circle cx="80.8" cy="20.8" r="4.3"/><circle cx="92" cy="20.8" r="4.3"/></g><text x="84.5" y="72" font-size="27" font-weight="bold" fill="#b4b6ba" text-anchor="middle" font-family="Liberation Sans" textLength="153" lengthAdjust="spacingAndGlyphs">mostaql.com</text></g></svg>
</body></html>
